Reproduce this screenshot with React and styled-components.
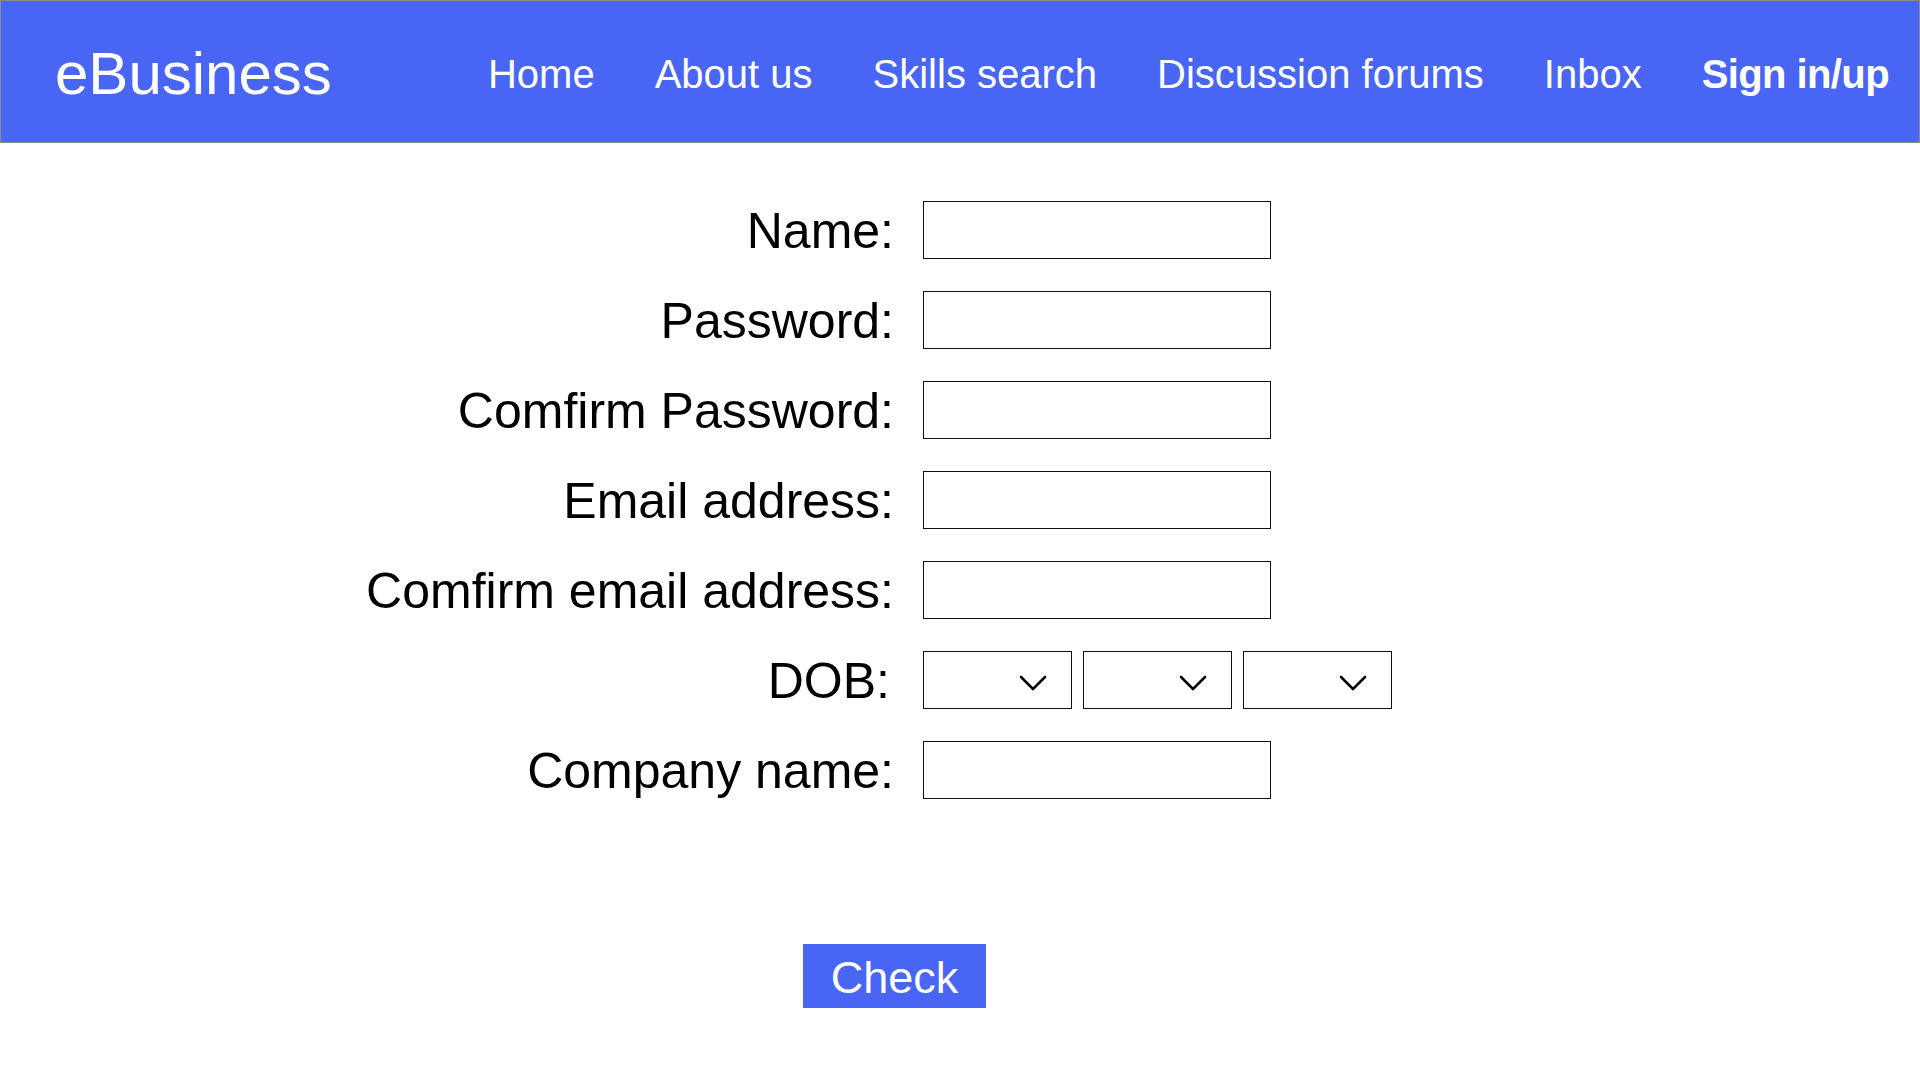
import React from "react";
import styled, { createGlobalStyle } from "styled-components";

const GlobalStyle = createGlobalStyle`
  body {
    margin: 0;
    background: #ffffff;
    font-family: "Liberation Sans", Arial, sans-serif;
    color: #000000;
  }
`

const HeaderStyled = styled.header`
  display: flex;
  align-items: center;
  height: 143px;
  box-sizing: border-box;
  padding: 5px 30px 0 54px;
  background-color: #4965f3;
  border: 1px solid #8c8c8c;
  color: #ffffff;
`
const LogoStyled = styled.div`
  font-size: 60px;
  line-height: 1;
`
const NavStyled = styled.nav`
  display: flex;
  align-items: center;
  gap: 60px;
  margin-left: auto;
`
const NavLinkStyled = styled.a`
  font-size: 40px;
  font-weight: ${props => (props.$bold ? "bold" : "normal")};
  letter-spacing: ${props => (props.$bold ? "-0.6px" : "0")};
  color: #ffffff;
  cursor: pointer;
`
const FormStyled = styled.form`
  display: grid;
  grid-template-columns: 894px auto;
  column-gap: 29px;
  row-gap: 32px;
  padding-top: 58px;
  align-items: center;
`
const LabelStyled = styled.label`
  font-size: 50px;
  text-align: right;
  height: 58px;
  line-height: 61px;
  padding-right: ${props => (props.$inset ? "4px" : "0")};
`
const InputStyled = styled.input`
  width: 348px;
  height: 58px;
  box-sizing: border-box;
  border: 1px solid #111111;
  border-radius: 0;
  padding: 0 10px;
  font-size: 28px;
  font-family: inherit;
  background: #ffffff;
  outline: none;
`
const DateGroupStyled = styled.div`
  display: flex;
  gap: 11px;
`
const SelectBoxStyled = styled.div`
  display: flex;
  align-items: center;
  justify-content: flex-end;
  width: 149px;
  height: 58px;
  box-sizing: border-box;
  border: 1px solid #111111;
  padding: 6px 24px 0 0;
  background: #ffffff;
`
const ActionsStyled = styled.div`
  padding: 145px 0 0 803px;
`
const CheckButtonStyled = styled.button`
  width: 183px;
  height: 64px;
  border: none;
  border-radius: 0;
  background-color: #4965f3;
  color: #ffffff;
  font-family: inherit;
  font-size: 45px;
  padding: 4px 0 0;
  cursor: pointer;
`

function Chevron() {
  return (
    <svg width="28" height="16" viewBox="0 0 28 16" fill="none">
      <path d="M2 2 L14 14 L26 2" stroke="#000" strokeWidth="2.6" strokeLinecap="round" strokeLinejoin="round" />
    </svg>
  )
}

const fields = [
  "Name:",
  "Password:",
  "Comfirm Password:",
  "Email address:",
  "Comfirm email address:",
]

const navItems = ["Home", "About us", "Skills search", "Discussion forums", "Inbox"]

function App() {
  return (
    <>
      <GlobalStyle />
      <HeaderStyled>
        <LogoStyled>eBusiness</LogoStyled>
        <NavStyled>
          {navItems.map(item => (
            <NavLinkStyled key={item}>{item}</NavLinkStyled>
          ))}
          <NavLinkStyled $bold>Sign in/up</NavLinkStyled>
        </NavStyled>
      </HeaderStyled>

      <FormStyled onSubmit={e => e.preventDefault()}>
        {fields.map(label => (
          <React.Fragment key={label}>
            <LabelStyled>{label}</LabelStyled>
            <InputStyled type={label.includes("Password") ? "password" : "text"} />
          </React.Fragment>
        ))}
        <LabelStyled $inset>DOB:</LabelStyled>
        <DateGroupStyled>
          <SelectBoxStyled><Chevron /></SelectBoxStyled>
          <SelectBoxStyled><Chevron /></SelectBoxStyled>
          <SelectBoxStyled><Chevron /></SelectBoxStyled>
        </DateGroupStyled>
        <LabelStyled>Company name:</LabelStyled>
        <InputStyled type="text" />
      </FormStyled>

      <ActionsStyled>
        <CheckButtonStyled type="button">Check</CheckButtonStyled>
      </ActionsStyled>
    </>
  )
}

export default App;
